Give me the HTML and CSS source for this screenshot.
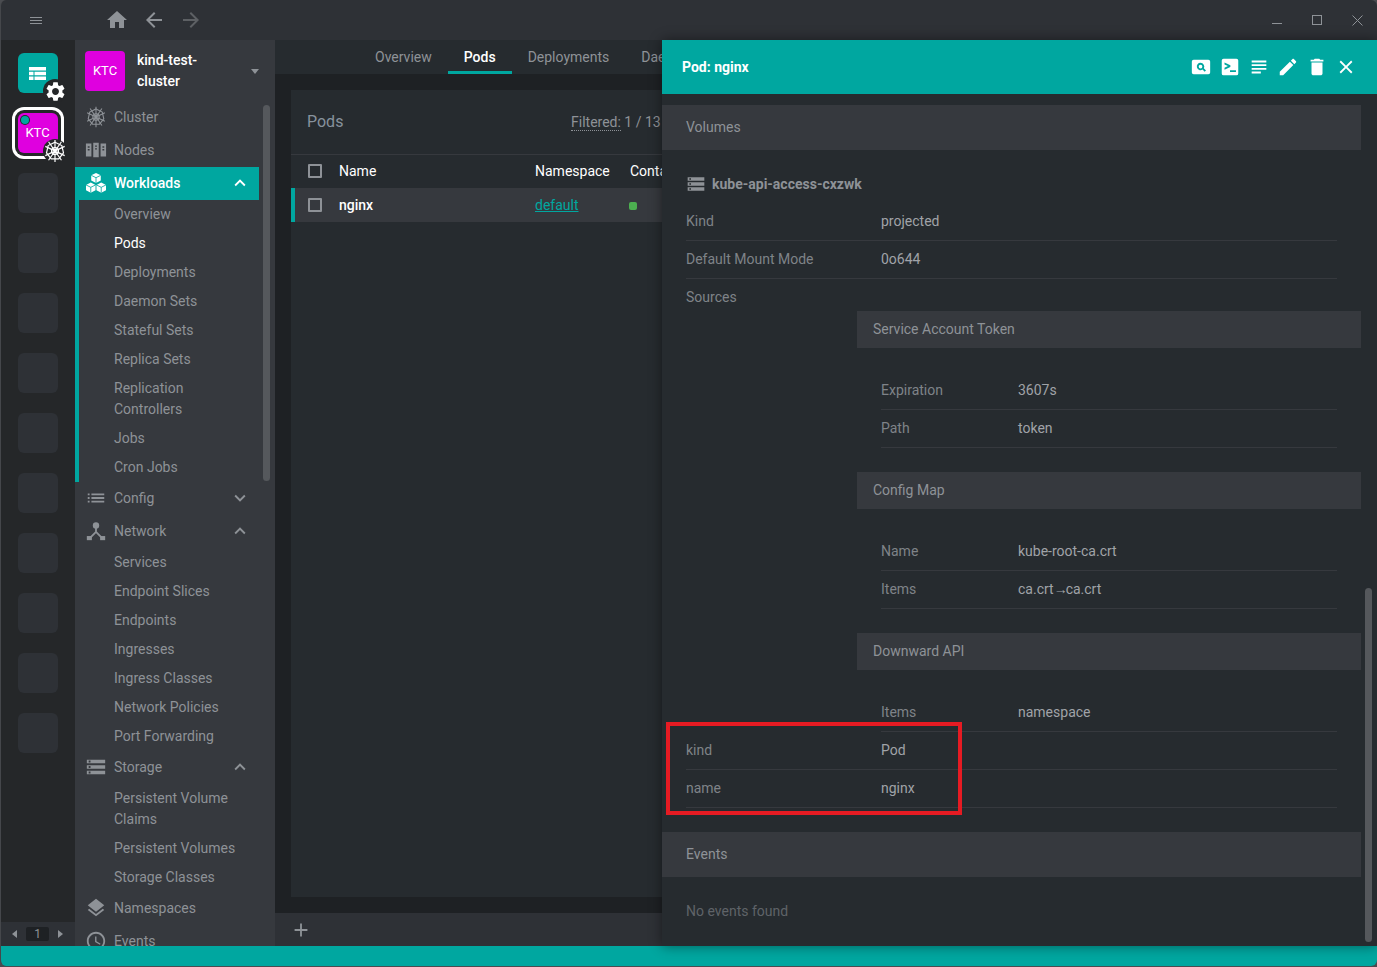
FILE: index.html
```html
<!DOCTYPE html>
<html lang="en">

<head>
  <meta charset="UTF-8" />
  <title>Pod: nginx</title>
  <link rel="stylesheet" href="styles.css">
</head>

<body>
  <svg class="sprites" width="0" height="0">
    <symbol id="i-home" viewBox="0 0 24 24"><path d="M10 20v-6h4v6h5v-8h3L12 3 2 12h3v8z"/></symbol>
    <symbol id="i-back" viewBox="0 0 24 24"><path d="M20 11H7.83l5.59-5.59L12 4l-8 8 8 8 1.41-1.41L7.83 13H20v-2z"/></symbol>
    <symbol id="i-forward" viewBox="0 0 24 24"><path d="M12 4l-1.41 1.41L16.17 11H4v2h12.17l-5.58 5.59L12 20l8-8z"/></symbol>
    <symbol id="i-less" viewBox="0 0 24 24"><path d="M12 8l-6 6 1.41 1.41L12 10.83l4.59 4.58L18 14z"/></symbol>
    <symbol id="i-more" viewBox="0 0 24 24"><path d="M16.59 8.59L12 13.17 7.41 8.59 6 10l6 6 6-6z"/></symbol>
    <symbol id="i-list" viewBox="0 0 24 24"><path d="M3 13h2v-2H3v2zm0 4h2v-2H3v2zm0-8h2V7H3v2zm4 4h14v-2H7v2zm0 4h14v-2H7v2zM7 7v2h14V7H7z"/></symbol>
    <symbol id="i-storage" viewBox="0 0 24 24"><path d="M2 20h20v-4H2v4zm2-3h2v2H4v-2zM2 4v4h20V4H2zm4 3H4V5h2v2zm-4 7h20v-4H2v4zm2-3h2v2H4v-2z"/></symbol>
    <symbol id="i-layers" viewBox="0 0 24 24"><path d="M11.99 18.54l-7.37-5.73L3 14.07l9 7 9-7-1.63-1.27-7.38 5.74zM12 16l7.36-5.73L21 9l-9-7-9 7 1.63 1.27L12 16z"/></symbol>
    <symbol id="i-clock" viewBox="0 0 24 24"><path d="M11.99 2C6.47 2 2 6.48 2 12s4.47 10 9.99 10C17.52 22 22 17.52 22 12S17.52 2 11.99 2zM12 20c-4.42 0-8-3.58-8-8s3.58-8 8-8 8 3.58 8 8-3.58 8-8 8zm.5-13H11v6l5.25 3.15.75-1.23-4.5-2.67z"/></symbol>
    <symbol id="i-gear" viewBox="0 0 24 24"><path d="M19.14 12.94c.04-.3.06-.61.06-.94 0-.32-.02-.64-.07-.94l2.03-1.58c.18-.14.23-.41.12-.61l-1.92-3.32c-.12-.22-.37-.29-.59-.22l-2.39.96c-.5-.38-1.03-.7-1.62-.94l-.36-2.54c-.04-.24-.24-.41-.48-.41h-3.84c-.24 0-.43.17-.47.41l-.36 2.54c-.59.24-1.13.57-1.62.94l-2.39-.96c-.22-.08-.47 0-.59.22L2.74 8.87c-.12.21-.08.47.12.61l2.03 1.58c-.05.3-.09.63-.09.94s.02.64.07.94l-2.03 1.58c-.18.14-.23.41-.12.61l1.92 3.32c.12.22.37.29.59.22l2.39-.96c.5.38 1.03.7 1.62.94l.36 2.54c.05.24.24.41.48.41h3.84c.24 0 .44-.17.47-.41l.36-2.54c.59-.24 1.13-.56 1.62-.94l2.39.96c.22.08.47 0 .59-.22l1.92-3.32c.12-.22.07-.47-.12-.61l-2.01-1.58zM12 15.6c-1.98 0-3.6-1.62-3.6-3.6s1.62-3.6 3.6-3.6 3.6 1.62 3.6 3.6-1.62 3.6-3.6 3.6z"/></symbol>
    <symbol id="i-edit" viewBox="0 0 24 24"><path d="M3 17.25V21h3.75L17.81 9.94l-3.75-3.75L3 17.25zM20.71 7.04c.39-.39.39-1.02 0-1.41l-2.34-2.34c-.39-.39-1.02-.39-1.41 0l-1.83 1.83 3.75 3.75 1.83-1.83z"/></symbol>
    <symbol id="i-delete" viewBox="0 0 24 24"><path d="M6 19c0 1.1.9 2 2 2h8c1.1 0 2-.9 2-2V7H6v12zM19 4h-3.5l-1-1h-5l-1 1H5v2h14V4z"/></symbol>
    <symbol id="i-close" viewBox="0 0 24 24"><path d="M19 6.41L17.59 5 12 10.59 6.41 5 5 6.41 10.59 12 5 17.59 6.41 19 12 13.41 17.59 19 19 17.59 13.41 12z"/></symbol>
    <symbol id="i-subject" viewBox="0 0 24 24"><path d="M14 17H4v2h10v-2zm6-8H4v2h16V9zM4 15h16v-2H4v2zM4 5v2h16V5H4z"/></symbol>
    <symbol id="i-add" viewBox="0 0 24 24"><path d="M19 13h-6v6h-2v-6H5v-2h6V5h2v6h6v2z"/></symbol>
    <symbol id="i-pageview" viewBox="0 0 24 24"><path fill-rule="evenodd" d="M4 4h16a2 2 0 0 1 2 2v12a2 2 0 0 1-2 2H4a2 2 0 0 1-2-2V6a2 2 0 0 1 2-2zm7.500 3.500a4 4 0 1 0 2.200 7.300l2.300 2.300 1.400-1.400-2.300-2.300a4 4 0 0 0-3.600-5.900zm0 2a2 2 0 1 1 0 4 2 2 0 0 1 0-4z"/></symbol>
    <symbol id="i-terminal" viewBox="0 0 24 24"><path fill-rule="evenodd" d="M5 3h14a2 2 0 0 1 2 2v14a2 2 0 0 1-2 2H5a2 2 0 0 1-2-2V5a2 2 0 0 1 2-2zm1 4v2.200L9.800 11 6 12.800V15l6.400-3.100v-1.800zM12 15.500v2h6.500v-2z"/></symbol>
    <symbol id="i-wheel" viewBox="-1 -1 26 26">
      <g fill="none" stroke="currentColor" stroke-width="1.300">
        <path d="M12 2.500l7.400 3.600 1.800 8-5.100 6.400H7.900l-5.100-6.400 1.800-8z"/>
        <circle cx="12" cy="12" r="3.800"/>
        <path d="M12 0v24M1.500 7l21 10M22.500 7l-21 10M5 22L19 2M19 22L5 2"/>
      </g>
    </symbol>
    <symbol id="i-nodes" viewBox="0 0 24 24">
      <path fill-rule="evenodd" d="M1 5h6v14H1zm2 3v1.500h2V8zm0 3v1.500h2V11zM9 4h6v16H9zm2 3v1.500h2V7zm0 3v1.500h2V10zM17 5h6v14h-6zm2 3v1.500h2V8zm0 3v1.500h2V11z"/>
    </symbol>
    <symbol id="i-cubes" viewBox="0 0 24 24">
      <path d="M12 1l5.200 2.600v5.800L12 12 6.800 9.400V3.600zM6.300 11.500l5.200 2.600v5.800L6.300 22.500 1.100 19.900v-5.800zM17.700 11.500l5.200 2.600v5.800l-5.200 2.600-5.200-2.600v-5.800z"/>
      <path fill="none" stroke="#00a7a0" stroke-width=".9" d="M6.800 3.600L12 6.200l5.200-2.600M12 6.200V12M1.100 14.100l5.200 2.600 5.200-2.600M6.300 16.700v5.800M12.500 14.100l5.200 2.600 5.200-2.600M17.700 16.700v5.800"/>
    </symbol>
    <symbol id="i-network" viewBox="0 0 24 24">
      <path fill="none" stroke="currentColor" stroke-width="2" d="M12 8v5L5 20M12 13l7 7"/>
      <circle cx="12" cy="6" r="3.500"/>
      <rect x="2" y="17.500" width="5.500" height="4.500"/>
      <rect x="16.500" y="17.500" width="5.500" height="4.500"/>
    </symbol>
  </svg>

  <div class="app">
    <header class="topbar">
      <div class="burger"><span></span><span></span><span></span></div>
      <div class="nav-icons">
        <svg class="nav-home"><use href="#i-home"/></svg>
        <svg class="nav-back"><use href="#i-back"/></svg>
        <svg class="nav-forward"><use href="#i-forward"/></svg>
      </div>
      <div class="win-controls">
        <span class="win-min"></span>
        <span class="win-max"></span>
        <svg class="win-close" viewBox="0 0 11 11"><path d="M.5.500l10 10M10.500.500l-10 10"/></svg>
      </div>
    </header>

    <div class="middle">
      <nav class="hotbar">
        <div class="hotbar-items">
          <div class="hot-item hot-catalog">
            <svg class="catalog-icon" viewBox="0 0 17 13">
              <path d="M0 0h17v3.500H0zM0 4.700h4.500v3.600H0zM5.500 4.700H17v3.600H5.500zM0 9.500h4.500V13H0zM5.500 9.500H17V13H5.500z"/>
            </svg>
            <span class="hot-badge"><svg><use href="#i-gear"/></svg></span>
          </div>
          <div class="hot-item hot-cluster">
            KTC
            <span class="hot-dot"></span>
            <span class="hot-badge"><svg class="badge-wheel"><use href="#i-wheel"/></svg></span>
          </div>
          <div class="hot-item"></div>
          <div class="hot-item"></div>
          <div class="hot-item"></div>
          <div class="hot-item"></div>
          <div class="hot-item"></div>
          <div class="hot-item"></div>
          <div class="hot-item"></div>
          <div class="hot-item"></div>
          <div class="hot-item"></div>
          <div class="hot-item"></div>
        </div>
        <div class="hotbar-pager">
          <span class="tri-left"></span>
          <span class="page-chip">1</span>
          <span class="tri-right"></span>
        </div>
      </nav>

      <aside class="sidebar">
        <div class="cluster-head">
          <div class="cluster-logo">KTC</div>
          <div class="cluster-name">kind-test-cluster</div>
          <span class="caret"></span>
        </div>
        <div class="menu">
          <div class="menu-item"><svg class="menu-icon"><use href="#i-wheel"/></svg>Cluster</div>
          <div class="menu-item"><svg class="menu-icon"><use href="#i-nodes"/></svg>Nodes</div>
          <div class="menu-item active"><svg class="menu-icon"><use href="#i-cubes"/></svg>Workloads<svg class="chevron"><use href="#i-less"/></svg></div>
          <div class="submenu bar">
            <div class="sub-item">Overview</div>
            <div class="sub-item current">Pods</div>
            <div class="sub-item">Deployments</div>
            <div class="sub-item">Daemon Sets</div>
            <div class="sub-item">Stateful Sets</div>
            <div class="sub-item">Replica Sets</div>
            <div class="sub-item">Replication Controllers</div>
            <div class="sub-item">Jobs</div>
            <div class="sub-item">Cron Jobs</div>
          </div>
          <div class="menu-item"><svg class="menu-icon"><use href="#i-list"/></svg>Config<svg class="chevron"><use href="#i-more"/></svg></div>
          <div class="menu-item"><svg class="menu-icon"><use href="#i-network"/></svg>Network<svg class="chevron"><use href="#i-less"/></svg></div>
          <div class="submenu">
            <div class="sub-item">Services</div>
            <div class="sub-item">Endpoint Slices</div>
            <div class="sub-item">Endpoints</div>
            <div class="sub-item">Ingresses</div>
            <div class="sub-item">Ingress Classes</div>
            <div class="sub-item">Network Policies</div>
            <div class="sub-item">Port Forwarding</div>
          </div>
          <div class="menu-item"><svg class="menu-icon"><use href="#i-storage"/></svg>Storage<svg class="chevron"><use href="#i-less"/></svg></div>
          <div class="submenu">
            <div class="sub-item">Persistent Volume Claims</div>
            <div class="sub-item">Persistent Volumes</div>
            <div class="sub-item">Storage Classes</div>
          </div>
          <div class="menu-item"><svg class="menu-icon"><use href="#i-layers"/></svg>Namespaces</div>
          <div class="menu-item"><svg class="menu-icon"><use href="#i-clock"/></svg>Events</div>
        </div>
        <div class="side-thumb"></div>
      </aside>

      <main class="main">
        <div class="tabs">
          <div class="tab">Overview</div>
          <div class="tab selected">Pods</div>
          <div class="tab">Deployments</div>
          <div class="tab">Daemon Sets</div>
        </div>
        <div class="content">
          <section class="card">
            <div class="card-head">
              <div class="card-title">Pods</div>
              <div class="card-filter"><span class="dotted">Filtered:</span> 1 / 13</div>
            </div>
            <div class="table-row table-head">
              <div class="cell-check"><span class="check"></span></div>
              <div class="cell-name">Name</div>
              <div class="cell-ns">Namespace</div>
              <div class="cell-cont">Containers</div>
            </div>
            <div class="table-row picked">
              <div class="cell-check"><span class="check"></span></div>
              <div class="cell-name">nginx</div>
              <div class="cell-ns"><span class="link">default</span></div>
              <div class="cell-cont"><span class="status-dot"></span></div>
            </div>
          </section>
        </div>
        <div class="dock"><svg class="dock-add"><use href="#i-add"/></svg></div>
      </main>

      <section class="drawer">
        <div class="drawer-head">
          <div class="drawer-title">Pod: nginx</div>
          <div class="drawer-tools">
            <svg><use href="#i-pageview"/></svg>
            <svg><use href="#i-terminal"/></svg>
            <svg><use href="#i-subject"/></svg>
            <svg><use href="#i-edit"/></svg>
            <svg><use href="#i-delete"/></svg>
            <svg><use href="#i-close"/></svg>
          </div>
        </div>
        <div class="drawer-body">
          <div class="section-title">Volumes</div>
          <div class="section-body">
            <div class="volume-name"><svg><use href="#i-storage"/></svg>kube-api-access-cxzwk</div>
            <div class="row"><div class="key">Kind</div><div class="val">projected</div></div>
            <div class="row"><div class="key">Default Mount Mode</div><div class="val">0o644</div></div>
            <div class="sources-label">Sources</div>

            <div class="nested">
              <div class="nested-title">Service Account Token</div>
              <div class="row"><div class="key">Expiration</div><div class="val">3607s</div></div>
              <div class="row"><div class="key">Path</div><div class="val">token</div></div>
              <div class="nested-title">Config Map</div>
              <div class="row"><div class="key">Name</div><div class="val">kube-root-ca.crt</div></div>
              <div class="row"><div class="key">Items</div><div class="val">ca.crt<span class="arrow">→</span>ca.crt</div></div>
              <div class="nested-title">Downward API</div>
              <div class="row"><div class="key">Items</div><div class="val">namespace</div></div>
            </div>

            <div class="row"><div class="key">kind</div><div class="val">Pod</div></div>
            <div class="row"><div class="key">name</div><div class="val">nginx</div></div>
          </div>
          <div class="section-title events-title">Events</div>
          <div class="no-events">No events found</div>
        </div>
        <div class="drawer-thumb"></div>
        <div class="red-box"></div>
      </section>
    </div>

    <footer class="statusbar"></footer>
  </div>
</body>

</html>
```

FILE: styles.css
```css
* {
  box-sizing: border-box;
}

html,
body {
  margin: 0;
  padding: 0;
  height: 100%;
  background: #4a4c50;
}

body {
  font-family: Roboto, "Liberation Sans", sans-serif;
  font-size: 14px;
  color: #8e9297;
  overflow: hidden;
}

.sprites {
  position: absolute;
}

svg {
  fill: currentColor;
}

.app {
  display: flex;
  flex-direction: column;
  height: 966px;
  border-left: 1px solid #45474b;
  border-radius: 6px;
  overflow: hidden;
}

/* top bar */
.topbar {
  flex: 0 0 40px;
  display: flex;
  align-items: center;
  background: #2e3136;
}

.burger {
  display: flex;
  flex-direction: column;
  gap: 2px;
  width: 12px;
  margin-left: 29px;
}

.burger span {
  height: 1px;
  background: #8e9297;
}

.nav-icons {
  display: flex;
  gap: 13px;
  margin-left: 63px;
}

.nav-icons svg {
  width: 24px;
  height: 24px;
}

.nav-forward {
  color: #5d6064;
}

.win-controls {
  display: flex;
  align-items: center;
  margin-left: auto;
  margin-right: 14px;
  gap: 30px;
}

.win-min {
  width: 10px;
  height: 1px;
  margin-top: 7px;
  background: #8e9297;
}

.win-max {
  width: 10px;
  height: 10px;
  border: 1px solid #8e9297;
}

.win-close {
  width: 11px;
  height: 11px;
}

.win-close path {
  stroke: #8e9297;
  fill: none;
}

.middle {
  flex: 1;
  display: flex;
  position: relative;
  min-height: 0;
}

/* hotbar */
.hotbar {
  flex: 0 0 74px;
  display: flex;
  flex-direction: column;
  background: #252729;
}

.hotbar-items {
  flex: 1;
  display: flex;
  flex-direction: column;
  align-items: center;
  gap: 20px;
  padding-top: 13px;
}

.hot-item {
  position: relative;
  display: flex;
  align-items: center;
  justify-content: center;
  width: 40px;
  height: 40px;
  flex: none;
  border-radius: 6px;
  background: #2e3136;
  color: #fff;
  font-size: 13px;
}

.hot-catalog {
  background: #00a7a0;
}

.catalog-icon {
  width: 17px;
  height: 13px;
  fill: #fff;
  margin: 1px 0 0 -1px;
}

.hot-cluster {
  padding: 0 1px 2px 0;
  background: #df00df;
  box-shadow: 0 0 0 3px #252729, 0 0 0 6px #fff;
}

.hot-dot {
  position: absolute;
  left: 3px;
  top: 3px;
  width: 8px;
  height: 8px;
  border-radius: 50%;
  background: #00a7a0;
  box-shadow: 0 0 0 1px #252729;
}

.hot-badge {
  position: absolute;
  left: 25px;
  top: 26px;
  width: 24px;
  height: 24px;
  border-radius: 50%;
  background: #252729;
  display: flex;
  align-items: center;
  justify-content: center;
}

.hot-badge svg {
  flex: none;
  width: 23px;
  height: 23px;
  color: #fff;
}

.hot-badge .badge-wheel {
  width: 24px;
  height: 24px;
}

.hotbar-pager {
  flex: 0 0 24px;
  display: flex;
  align-items: center;
  background: #2e3136;
  padding-left: 11px;
}

.tri-left,
.tri-right {
  width: 0;
  height: 0;
  border-top: 4px solid transparent;
  border-bottom: 4px solid transparent;
}

.tri-left {
  border-right: 5px solid #8e9297;
}

.tri-right {
  border-left: 5px solid #8e9297;
}

.page-chip {
  width: 23px;
  height: 14px;
  margin: 0 9px;
  border-radius: 2px;
  background: #1e2124;
  text-align: center;
  line-height: 14px;
  font-size: 12px;
}

/* sidebar */
.sidebar {
  flex: 0 0 200px;
  position: relative;
  background: #36393e;
  overflow: hidden;
}

.cluster-head {
  display: flex;
  height: 61px;
  padding: 11px 16px 11px 10px;
  align-items: center;
}

.cluster-logo {
  flex: 0 0 40px;
  height: 40px;
  border-radius: 4px;
  background: #df00df;
  color: #fff;
  font-size: 13px;
  line-height: 39px;
  text-align: center;
  margin-right: 12px;
}

.cluster-name {
  width: 94px;
  color: #fff;
  font-weight: 500;
  line-height: 21px;
}

.caret {
  margin: 2px 0 0 auto;
  width: 0;
  height: 0;
  border-left: 4.500px solid transparent;
  border-right: 4.500px solid transparent;
  border-top: 5px solid #8e9297;
}

.menu {
  width: 184px;
}

.menu-item {
  display: flex;
  align-items: center;
  height: 33px;
  padding: 0 0 2px 10px;
}

.menu-icon {
  flex: 0 0 22px;
  width: 22px;
  height: 22px;
  margin-right: 7px;
}

.chevron {
  width: 22px;
  height: 22px;
  margin-left: auto;
  margin-right: 8px;
}

.menu-item.active {
  background: #00a7a0;
  color: #fff;
  font-weight: 500;
}

.sub-item {
  padding: 4px 16px 4px 39px;
  line-height: 21px;
}

.submenu.bar {
  border-left: 4px solid #00a7a0;
}

.submenu.bar .sub-item {
  padding-left: 35px;
}

.sub-item.current {
  color: #fff;
}

.side-thumb {
  position: absolute;
  left: 188px;
  top: 65px;
  width: 7px;
  height: 376px;
  border-radius: 4px;
  background: #55585c;
}

/* main, the part right of the drawer edge is never seen */
.main {
  flex: 1;
  min-width: 0;
  display: flex;
  flex-direction: column;
  padding-right: 715px;
  background: #1e2124;
}

.tabs {
  flex: 0 0 34px;
  display: flex;
  padding-left: 84px;
  background: #262b2f;
  overflow: hidden;
}

.tab {
  flex: none;
  padding: 0 16px;
  line-height: 34px;
}

.tab.selected {
  color: #fff;
  font-weight: 500;
  border-bottom: 3px solid #00a7a0;
}

.content {
  flex: 1;
  padding: 16px 0 16px 16px;
  min-height: 0;
}

.card {
  height: 100%;
  background: #262b2f;
}

.card-head {
  display: flex;
  align-items: center;
  height: 65px;
  padding: 0 0 2px 16px;
  border-bottom: 1px solid #36393e;
  white-space: nowrap;
  overflow: hidden;
}

.card-title {
  flex: 0 0 264px;
  font-size: 16px;
  color: #87929d;
}

.card-filter {
  margin-top: 1px;
}

.dotted {
  border-bottom: 1px dotted #8e9297;
}

.table-row {
  display: flex;
  align-items: center;
  height: 34px;
  overflow: hidden;
  white-space: nowrap;
}

.table-head {
  height: 33px;
  padding-bottom: 2px;
  color: #fff;
}

.picked {
  background: #36393e;
  box-shadow: inset 4px 0 0 #00a7a0;
  color: #fff;
  font-weight: 500;
}

.cell-check {
  flex: 0 0 48px;
  padding-left: 17px;
  display: flex;
}

.check {
  width: 14px;
  height: 14px;
  border: 2px solid #8e9297;
  border-radius: 1px;
}

.cell-name {
  flex: 0 0 196px;
}

.cell-ns {
  flex: 0 0 95px;
}

.link {
  color: #00a7a0;
  text-decoration: underline;
  font-weight: 400;
}

.status-dot {
  display: inline-block;
  width: 8px;
  height: 8px;
  margin-left: -1px;
  border-radius: 2px;
  background: #4caf50;
}

.dock {
  flex: 0 0 33px;
  display: flex;
  align-items: center;
  padding-left: 15px;
  background: #2e3136;
}

.dock-add {
  width: 22px;
  height: 22px;
}

/* drawer */
.drawer {
  position: absolute;
  top: 0;
  bottom: 0;
  right: 0;
  width: 715px;
  background: #262b2f;
  box-shadow: 0 0 12px rgba(0, 0, 0, 0.45);
  overflow: hidden;
}

.drawer-head {
  display: flex;
  align-items: center;
  justify-content: space-between;
  height: 54px;
  padding: 0 20px;
  background: #00a7a0;
  color: #fff;
}

.drawer-title {
  font-weight: 700;
}

.drawer-tools {
  display: flex;
  gap: 7px;
}

.drawer-tools svg {
  width: 22px;
  height: 22px;
  display: block;
}

.drawer-body {
  width: 699px;
  padding-top: 11px;
}

.section-title {
  height: 45px;
  line-height: 45px;
  padding-left: 24px;
  background: #36393e;
}

.section-body {
  padding: 22px 24px 0;
}

.volume-name {
  display: flex;
  align-items: center;
  height: 24px;
  margin-bottom: 7px;
  font-weight: 700;
}

.volume-name svg {
  width: 20px;
  height: 20px;
  margin-right: 6px;
}

.row {
  display: flex;
  align-items: center;
  height: 38px;
  padding-bottom: 2px;
  border-bottom: 1px solid #36393e;
  color: #7f8388;
}

.key {
  flex: 0 0 195px;
}

.val {
  color: #a0a3a8;
}

.arrow {
  letter-spacing: -3px;
  margin-right: 1px;
}

.sources-label {
  height: 32px;
  padding-top: 9px;
  line-height: 18px;
  color: #7f8388;
}

.nested {
  margin-left: 195px;
}

.nested .key {
  flex-basis: 137px;
}

.nested-title {
  height: 37px;
  line-height: 36px;
  margin: 24px -24px;
  padding-left: 16px;
  background: #36393e;
}

.nested-title:first-child {
  margin-top: 0;
}

.events-title {
  margin-top: 24px;
}

.no-events {
  padding: 25px 24px 0;
  line-height: 18px;
  color: #5f6368;
}

.drawer-thumb {
  position: absolute;
  left: 703px;
  top: 548px;
  width: 7px;
  height: 354px;
  border-radius: 4px;
  background: #55585c;
}

/* annotation drawn on top of the shot */
.red-box {
  position: absolute;
  left: 4px;
  top: 682px;
  width: 296px;
  height: 93px;
  border: 4px solid #e61b23;
}

.statusbar {
  flex: 0 0 20px;
  background: #00a7a0;
}
```
